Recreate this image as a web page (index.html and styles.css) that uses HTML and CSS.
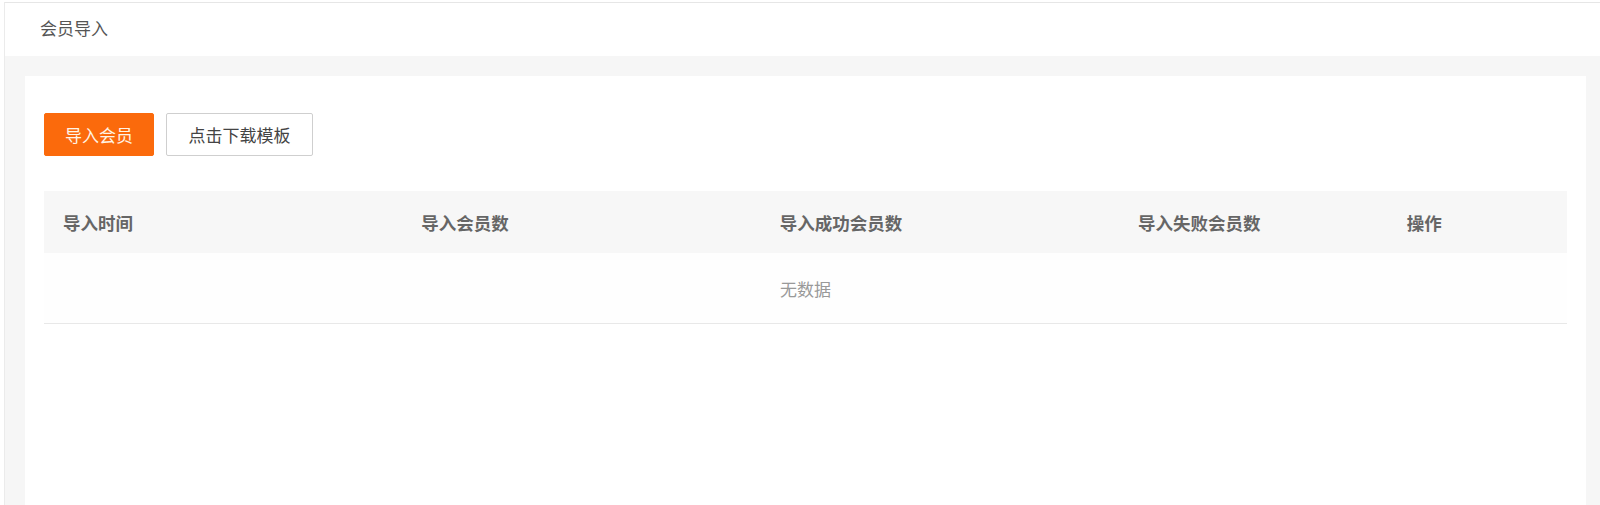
FILE: index.html
```html
<!DOCTYPE html>
<html lang="zh-CN">

<head>
  <meta charset="UTF-8">
  <meta name="viewport" content="width=device-width, initial-scale=1.0">
  <title>会员导入</title>
  <link rel="stylesheet" href="styles.css">
</head>

<body>
  <div class="page">
    <div class="topbar">会员导入</div>
    <div class="main">
      <div class="card">
        <div class="actions">
          <button class="btn btn-primary">导入会员</button>
          <button class="btn btn-default">点击下载模板</button>
        </div>
        <div class="table">
          <div class="table-head">
            <div class="cell">导入时间</div>
            <div class="cell">导入会员数</div>
            <div class="cell">导入成功会员数</div>
            <div class="cell">导入失败会员数</div>
            <div class="cell">操作</div>
          </div>
          <div class="table-empty">无数据</div>
        </div>
      </div>
    </div>
  </div>
</body>

</html>
```

FILE: styles.css
```css
* {
  box-sizing: border-box;
}

html,
body {
  margin: 0;
  height: 100%;
}

body {
  font-family: "Noto Sans CJK SC", "Liberation Sans", sans-serif;
  background: #fff;
  color: #333;
  overflow: hidden;
}

.page {
  margin: 2px 0 0 4px;
  border-top: 1px solid #e6e6e6;
  border-left: 1px solid #ebebeb;
  height: calc(100% - 2px);
  display: flex;
  flex-direction: column;
}

.topbar {
  height: 53px;
  flex-shrink: 0;
  display: flex;
  align-items: center;
  padding: 0 0 5px 35px;
  font-size: 17px;
  color: #555;
  background: #fff;
}

.main {
  flex: 1;
  background: #f6f6f6;
  padding: 20px 14px 0 20px;
}

.card {
  background: #fff;
  height: 100%;
  padding: 37px 19px 0 19px;
}

.actions {
  display: flex;
  gap: 12px;
}

.btn {
  height: 43px;
  font-size: 17px;
  font-family: inherit;
  border-radius: 2px;
  padding: 0;
  cursor: pointer;
}

.btn-primary {
  width: 110px;
  background: #fb6a0c;
  border: 1px solid #fb6a0c;
  color: #fff4e6;
}

.btn-default {
  width: 147px;
  background: #fff;
  border: 1px solid #cfcfcf;
  color: #444;
}

.table {
  margin-top: 35px;
}

.table-head {
  display: grid;
  grid-template-columns: 2fr 2fr 2fr 1.5fr 1fr;
  height: 62px;
  align-items: center;
  background: #f7f7f7;
}

.cell {
  padding-left: 19px;
  font-size: 17.5px;
  font-weight: bold;
  color: #666;
}

.table-empty {
  height: 71px;
  display: flex;
  align-items: center;
  justify-content: center;
  font-size: 17px;
  color: #999;
  background: #fefefe;
  border-bottom: 1px solid #e8e8e8;
}
```
